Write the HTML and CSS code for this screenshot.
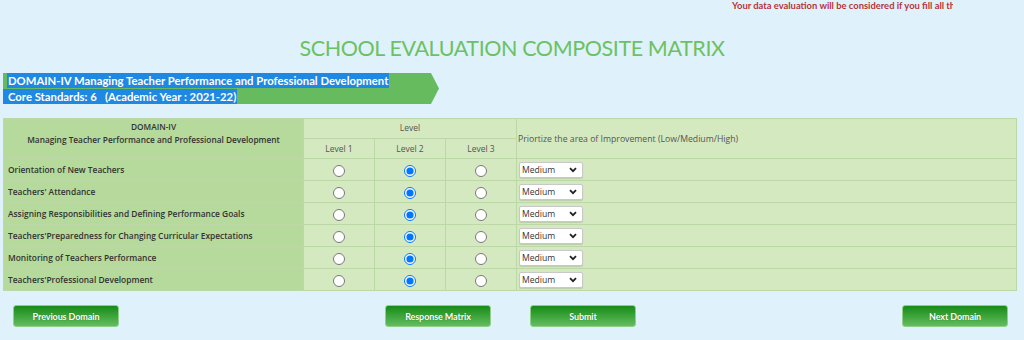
FILE: index.html
```html
<!DOCTYPE html>
<html>
<head>
<meta charset="utf-8">
<link rel="stylesheet" href="styles.css">
</head>
<body>
<div class="page">
  <div class="notice-row">
    <div class="notice">Your data evaluation will be considered if you fill all the fields</div>
  </div>
  <h1 class="title">SCHOOL EVALUATION COMPOSITE MATRIX</h1>
  <div class="banner">
    <div class="banner-line first"><span class="sel">DOMAIN-IV Managing Teacher Performance and Professional Development</span></div>
    <div class="banner-line"><span class="sel">Core Standards: 6 &nbsp; (Academic Year : 2021-22)</span></div>
  </div>
  <table class="matrix">
    <tr class="head">
      <th class="domain" rowspan="2">DOMAIN-IV<br>Managing Teacher Performance and Professional Development</th>
      <th class="lvl top" colspan="3">Level</th>
      <th class="prio" rowspan="2">Priortize the area of Improvement (Low/Medium/High)</th>
    </tr>
    <tr class="head">
      <th class="lvl">Level 1</th>
      <th class="lvl">Level 2</th>
      <th class="lvl">Level 3</th>
    </tr>
    <tr class="row">
      <td class="label">Orientation of New Teachers</td>
      <td class="radio"><input type="radio" name="r1"></td>
      <td class="radio"><input type="radio" name="r1" checked></td>
      <td class="radio"><input type="radio" name="r1"></td>
      <td class="pick"><span class="selwrap"><select><option>Low</option><option selected>Medium</option><option>High</option></select><svg class="chev" width="8" height="6" viewBox="0 0 8 6"><path d="M1 1.2 L4 4.2 L7 1.2" fill="none" stroke="#222" stroke-width="1.8"/></svg></span></td>
    </tr>
    <tr class="row">
      <td class="label">Teachers' Attendance</td>
      <td class="radio"><input type="radio" name="r2"></td>
      <td class="radio"><input type="radio" name="r2" checked></td>
      <td class="radio"><input type="radio" name="r2"></td>
      <td class="pick"><span class="selwrap"><select><option>Low</option><option selected>Medium</option><option>High</option></select><svg class="chev" width="8" height="6" viewBox="0 0 8 6"><path d="M1 1.2 L4 4.2 L7 1.2" fill="none" stroke="#222" stroke-width="1.8"/></svg></span></td>
    </tr>
    <tr class="row">
      <td class="label">Assigning Responsibilities and Defining Performance Goals</td>
      <td class="radio"><input type="radio" name="r3"></td>
      <td class="radio"><input type="radio" name="r3" checked></td>
      <td class="radio"><input type="radio" name="r3"></td>
      <td class="pick"><span class="selwrap"><select><option>Low</option><option selected>Medium</option><option>High</option></select><svg class="chev" width="8" height="6" viewBox="0 0 8 6"><path d="M1 1.2 L4 4.2 L7 1.2" fill="none" stroke="#222" stroke-width="1.8"/></svg></span></td>
    </tr>
    <tr class="row">
      <td class="label">Teachers'Preparedness for Changing Curricular Expectations</td>
      <td class="radio"><input type="radio" name="r4"></td>
      <td class="radio"><input type="radio" name="r4" checked></td>
      <td class="radio"><input type="radio" name="r4"></td>
      <td class="pick"><span class="selwrap"><select><option>Low</option><option selected>Medium</option><option>High</option></select><svg class="chev" width="8" height="6" viewBox="0 0 8 6"><path d="M1 1.2 L4 4.2 L7 1.2" fill="none" stroke="#222" stroke-width="1.8"/></svg></span></td>
    </tr>
    <tr class="row">
      <td class="label">Monitoring of Teachers Performance</td>
      <td class="radio"><input type="radio" name="r5"></td>
      <td class="radio"><input type="radio" name="r5" checked></td>
      <td class="radio"><input type="radio" name="r5"></td>
      <td class="pick"><span class="selwrap"><select><option>Low</option><option selected>Medium</option><option>High</option></select><svg class="chev" width="8" height="6" viewBox="0 0 8 6"><path d="M1 1.2 L4 4.2 L7 1.2" fill="none" stroke="#222" stroke-width="1.8"/></svg></span></td>
    </tr>
    <tr class="row">
      <td class="label">Teachers'Professional Development</td>
      <td class="radio"><input type="radio" name="r6"></td>
      <td class="radio"><input type="radio" name="r6" checked></td>
      <td class="radio"><input type="radio" name="r6"></td>
      <td class="pick"><span class="selwrap"><select><option>Low</option><option selected>Medium</option><option>High</option></select><svg class="chev" width="8" height="6" viewBox="0 0 8 6"><path d="M1 1.2 L4 4.2 L7 1.2" fill="none" stroke="#222" stroke-width="1.8"/></svg></span></td>
    </tr>
  </table>
  <div class="actions">
    <button class="btn">Previous Domain</button>
    <div class="mid">
      <button class="btn">Response Matrix</button>
      <button class="btn">Submit</button>
    </div>
    <button class="btn">Next Domain</button>
  </div>
</div>
</body>
</html>
```

FILE: styles.css
```css
html, body {
  margin: 0;
  padding: 0;
  background: #dff2fb;
}
.page {
  width: 1024px;
  height: 340px;
  overflow: hidden;
  font-family: "Open Sans", "Liberation Sans", sans-serif;
}
.notice-row {
  display: flex;
  height: 12px;
}
.notice {
  margin-left: 732px;
  width: 221px;
  overflow: hidden;
  white-space: nowrap;
  font-family: Lato, "Liberation Sans", sans-serif;
  font-weight: 700;
  font-size: 9.4px;
  line-height: 12px;
  color: #b8333a;
}
.title {
  margin: 23px 0 0 0;
  text-align: center;
  font-family: Lato, "Liberation Sans", sans-serif;
  font-weight: 400;
  font-size: 21.5px;
  line-height: 26px;
  letter-spacing: -0.4px;
  color: #6cc163;
}
.banner {
  margin: 12px 0 0 3px;
  width: 436px;
  height: 31px;
  background: #66bb5f;
  clip-path: polygon(0 0, 428px 0, 436px 50%, 428px 100%, 0 100%);
  font-family: Lato, "Liberation Sans", sans-serif;
  font-weight: 700;
  font-size: 11.3px;
  color: #ffffff;
}
.banner-line {
  height: 15.5px;
  line-height: 15.5px;
  white-space: nowrap;
}
.banner-line.first {
  padding-left: 4px;
}
.sel {
  background: #1f88e2;
  padding: 1px;
}
.banner-line:not(.first) .sel {
  padding-left: 5px;
}
.matrix {
  margin: 14px 0 0 3px;
  width: 1014px;
  border-collapse: collapse;
  font-size: 8.5px;
  line-height: 12px;
  color: #333;
}
.matrix th, .matrix td {
  border: 1px solid #bcd8a6;
  padding: 0;
  background: #d4e9c0;
}
.matrix tr.head {
  height: 20px;
}
.matrix tr.row {
  height: 22px;
}
.matrix .head th {
  font-weight: 400;
}
.matrix th.domain {
  width: 299px;
  background: #b5da9b;
  font-weight: 600;
  font-size: 8.3px;
  line-height: 12.5px;
  vertical-align: top;
  padding-top: 2px;
  color: #333;
}
.matrix th.lvl {
  width: 70px;
  text-align: center;
  color: #555;
}
.matrix th.lvl.top {
  vertical-align: top;
  padding-top: 3px;
}
.matrix th.prio {
  text-align: left;
  padding-left: 1px;
  color: #555;
  font-size: 8.7px;
}
.matrix td.label {
  background: #b5da9b;
  padding-left: 4px;
  font-weight: 600;
  font-size: 8.4px;
  color: #333;
}
.matrix td.radio {
  text-align: center;
}
.matrix td.radio input {
  margin: 2px 0 0 0;
  width: 12px;
  height: 12px;
  vertical-align: middle;
}
.matrix td.pick {
  padding-left: 2px;
}
.selwrap {
  position: relative;
  display: inline-block;
  vertical-align: middle;
}
.selwrap select {
  -webkit-appearance: none;
  appearance: none;
  width: 64px;
  height: 16px;
  margin: 0;
  padding: 0 0 0 2px;
  border: 1px solid #c8c8c8;
  border-radius: 2px;
  background: #ffffff;
  box-shadow: 0 1px 1px rgba(0,0,0,0.12);
  font-family: "Open Sans", "Liberation Sans", sans-serif;
  font-size: 8.6px;
  color: #333;
  display: block;
}
.chev {
  position: absolute;
  right: 6px;
  top: 5px;
  pointer-events: none;
}
.actions {
  display: flex;
  justify-content: space-between;
  align-items: center;
  margin-top: 14px;
  padding: 0 16px 0 13px;
}
.mid {
  display: flex;
  gap: 39px;
}
.btn {
  width: 106px;
  height: 22px;
  margin: 0;
  padding: 0;
  border: 1px solid #8fcf8a;
  border-radius: 3px;
  background: linear-gradient(#168b16, #64bd61);
  color: #ffffff;
  font-family: Lato, "Liberation Sans", sans-serif;
  font-weight: 700;
  font-size: 9px;
  letter-spacing: -0.1px;
  text-shadow: 0 0 1px rgba(0,60,0,0.6);
}
```
